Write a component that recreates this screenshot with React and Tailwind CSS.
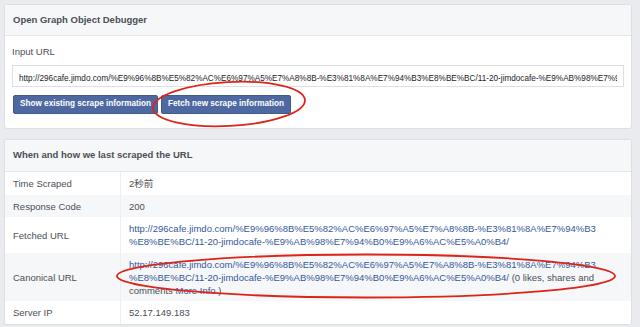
import React from "react";

const F = { fontFamily: '"Liberation Sans", Arial, "Noto Sans CJK JP", sans-serif' };

function Row({ label, children, gray }) {
  return (
    <div className={`flex ${gray ? "bg-[#f6f7f9]" : "bg-white"}`}>
      <div className="w-[116px] shrink-0 border-r border-[#eceef1] pl-[8px] pt-[5px] pb-[4.5px] text-[9.5px] leading-[13px] text-[#4b4f56] flex items-center">
        {label}
      </div>
      <div className="flex-1 pl-[8px] pt-[5px] pb-[4.5px] text-[9.5px] leading-[13px] text-[#4b4f56] whitespace-nowrap">
        {children}
      </div>
    </div>
  );
}

export default function App() {
  const url =
    "http://296cafe.jimdo.com/%E9%96%8B%E5%82%AC%E6%97%A5%E7%A8%8B-%E3%81%8A%E7%94%B3%E8%BE%BC/11-20-jimdocafe-%E9%AB%98%E7%94%B0%E9%A6%AC%E5%A0%B4/";
  const l1 = "http://296cafe.jimdo.com/%E9%96%8B%E5%82%AC%E6%97%A5%E7%A8%8B-%E3%81%8A%E7%94%B3";
  const l2 = "%E8%BE%BC/11-20-jimdocafe-%E9%AB%98%E7%94%B0%E9%A6%AC%E5%A0%B4/";
  return (
    <div style={F} className="relative w-[640px] h-[327px] overflow-hidden bg-[#e9ebee] pl-[4px] pr-[8px] pt-[4px]">
      {/* Card 1 */}
      <div className="bg-white rounded-[3px] border border-[#dddfe2] overflow-hidden">
        <div className="h-[31px] bg-[#f6f7f9] border-b border-[#e5e5e5] flex items-center pl-[8px] text-[9.5px] font-bold text-[#4b4f56]">
          Open Graph Object Debugger
        </div>
        <div className="px-[7px] pt-[9px] pb-[14px]">
          <div className="text-[9.5px] leading-[13px] text-[#4b4f56]">Input URL</div>
          <div className="mt-[7px] h-[22px] border border-[#dddfe2] bg-white flex items-center pl-[6px] pr-[6px]">
            <div className="flex-1 overflow-hidden">
              <span className="text-[8.2px] text-[#1d2129] whitespace-nowrap">{url}</span>
            </div>
          </div>
          <div className="mt-[8px] flex gap-[3px] pl-[1px]">
            <button className="h-[19px] w-[145px] bg-[#4e69a2] border border-[#435a8b] rounded-[2px] text-white text-[8.2px] font-bold flex items-center justify-center">
              Show existing scrape information
            </button>
            <button className="h-[19px] w-[130px] bg-[#4e69a2] border border-[#435a8b] rounded-[2px] text-white text-[8.2px] font-bold flex items-center justify-center">
              Fetch new scrape information
            </button>
          </div>
        </div>
      </div>

      {/* Card 2 */}
      <div className="mt-[10px] bg-white rounded-[3px] border border-[#dddfe2] overflow-hidden">
        <div className="h-[32px] bg-[#f6f7f9] border-b border-[#e5e5e5] flex items-center pl-[8px] text-[9.5px] font-bold text-[#4b4f56]">
          When and how we last scraped the URL
        </div>
        <Row label="Time Scraped">2秒前</Row>
        <Row label="Response Code" gray>200</Row>
        <Row label="Fetched URL">
          <div className="text-[#365899]">{l1}</div>
          <div className="text-[#365899]">{l2}</div>
        </Row>
        <Row label="Canonical URL" gray>
          <div className="text-[#365899]">{l1}</div>
          <div>
            <span className="text-[#365899]">{l2}</span>
            <span> (0 likes, shares and</span>
          </div>
          <div>
            comments <span className="text-[#365899]">More Info</span> )
          </div>
        </Row>
        <Row label="Server IP">52.17.149.183</Row>
      </div>

      {/* annotation overlay */}
      <svg className="absolute left-0 top-0 pointer-events-none" width="640" height="327">
        <ellipse cx="229" cy="104" rx="76" ry="22" fill="none" stroke="#dc2418" strokeWidth="1.8" transform="rotate(-3 229 104)" />
        <ellipse cx="366" cy="276" rx="249" ry="21.5" fill="none" stroke="#dc2418" strokeWidth="1.8" />
      </svg>
    </div>
  );
}
